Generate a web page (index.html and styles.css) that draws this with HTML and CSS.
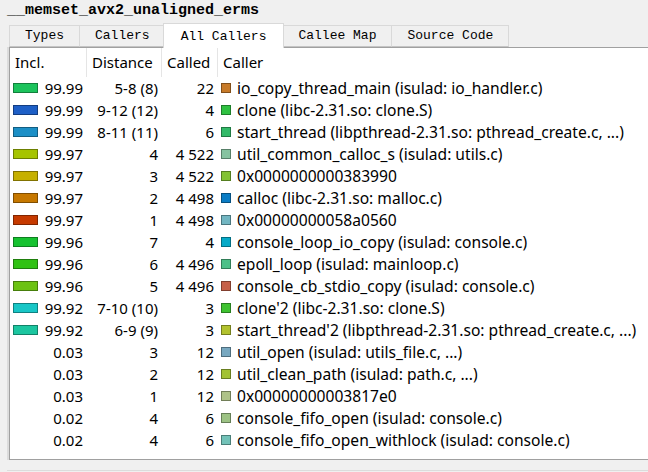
FILE: index.html
```html
<!DOCTYPE html>
<html>
<head>
<meta charset="utf-8">
<link rel="stylesheet" href="styles.css">
</head>
<body>
<div class="title">__memset_avx2_unaligned_erms</div>
<div class="tabs">
  <div class="tab">Types</div>
  <div class="tab">Callers</div>
  <div class="tab active">All Callers</div>
  <div class="tab">Callee Map</div>
  <div class="tab">Source Code</div>
</div>
<div class="panel">
  <div class="row head">
    <div class="cell h">Incl.</div>
    <div class="cell h">Distance</div>
    <div class="cell h">Called</div>
    <div class="cell h last">Caller</div>
  </div>
  <div class="row"><div class="cell incl"><span class="bar" style="background:#1cc35c"></span><span class="num">99.99</span></div><div class="cell num">5-8 (8)</div><div class="cell num">22</div><div class="cell caller"><span class="sq" style="background:#c77a28"></span>io_copy_thread_main (isulad: io_handler.c)</div></div>
  <div class="row"><div class="cell incl"><span class="bar" style="background:#1e5fc6"></span><span class="num">99.99</span></div><div class="cell num">9-12 (12)</div><div class="cell num">4</div><div class="cell caller"><span class="sq" style="background:#2fc141"></span>clone (libc-2.31.so: clone.S)</div></div>
  <div class="row"><div class="cell incl"><span class="bar" style="background:#1c8fc6"></span><span class="num">99.99</span></div><div class="cell num">8-11 (11)</div><div class="cell num">6</div><div class="cell caller"><span class="sq" style="background:#32ba68"></span>start_thread (libpthread-2.31.so: pthread_create.c, ...)</div></div>
  <div class="row"><div class="cell incl"><span class="bar" style="background:#a6c400"></span><span class="num">99.97</span></div><div class="cell num">4</div><div class="cell num">4 522</div><div class="cell caller"><span class="sq" style="background:#86c3a0"></span>util_common_calloc_s (isulad: utils.c)</div></div>
  <div class="row"><div class="cell incl"><span class="bar" style="background:#c6b000"></span><span class="num">99.97</span></div><div class="cell num">3</div><div class="cell num">4 522</div><div class="cell caller"><span class="sq" style="background:#82c232"></span>0x0000000000383990</div></div>
  <div class="row"><div class="cell incl"><span class="bar" style="background:#c67800"></span><span class="num">99.97</span></div><div class="cell num">2</div><div class="cell num">4 498</div><div class="cell caller"><span class="sq" style="background:#0a7cc4"></span>calloc (libc-2.31.so: malloc.c)</div></div>
  <div class="row"><div class="cell incl"><span class="bar" style="background:#c63a00"></span><span class="num">99.97</span></div><div class="cell num">1</div><div class="cell num">4 498</div><div class="cell caller"><span class="sq" style="background:#72b6c2"></span>0x00000000058a0560</div></div>
  <div class="row"><div class="cell incl"><span class="bar" style="background:#16c230"></span><span class="num">99.96</span></div><div class="cell num">7</div><div class="cell num">4</div><div class="cell caller"><span class="sq" style="background:#06aac8"></span>console_loop_io_copy (isulad: console.c)</div></div>
  <div class="row"><div class="cell incl"><span class="bar" style="background:#30c214"></span><span class="num">99.96</span></div><div class="cell num">6</div><div class="cell num">4 496</div><div class="cell caller"><span class="sq" style="background:#4cc088"></span>epoll_loop (isulad: mainloop.c)</div></div>
  <div class="row"><div class="cell incl"><span class="bar" style="background:#6cc212"></span><span class="num">99.96</span></div><div class="cell num">5</div><div class="cell num">4 496</div><div class="cell caller"><span class="sq" style="background:#c66048"></span>console_cb_stdio_copy (isulad: console.c)</div></div>
  <div class="row"><div class="cell incl"><span class="bar" style="background:#18c6c6"></span><span class="num">99.92</span></div><div class="cell num">7-10 (10)</div><div class="cell num">3</div><div class="cell caller"><span class="sq" style="background:#3ec230"></span>clone'2 (libc-2.31.so: clone.S)</div></div>
  <div class="row"><div class="cell incl"><span class="bar" style="background:#1cc6a0"></span><span class="num">99.92</span></div><div class="cell num">6-9 (9)</div><div class="cell num">3</div><div class="cell caller"><span class="sq" style="background:#b2c22e"></span>start_thread'2 (libpthread-2.31.so: pthread_create.c, ...)</div></div>
  <div class="row"><div class="cell incl"><span class="num">0.03</span></div><div class="cell num">3</div><div class="cell num">12</div><div class="cell caller"><span class="sq" style="background:#78a8c0"></span>util_open (isulad: utils_file.c, ...)</div></div>
  <div class="row"><div class="cell incl"><span class="num">0.03</span></div><div class="cell num">2</div><div class="cell num">12</div><div class="cell caller"><span class="sq" style="background:#a2c232"></span>util_clean_path (isulad: path.c, ...)</div></div>
  <div class="row"><div class="cell incl"><span class="num">0.03</span></div><div class="cell num">1</div><div class="cell num">12</div><div class="cell caller"><span class="sq" style="background:#aec288"></span>0x00000000003817e0</div></div>
  <div class="row"><div class="cell incl"><span class="num">0.02</span></div><div class="cell num">4</div><div class="cell num">6</div><div class="cell caller"><span class="sq" style="background:#9cc284"></span>console_fifo_open (isulad: console.c)</div></div>
  <div class="row"><div class="cell incl"><span class="num">0.02</span></div><div class="cell num">4</div><div class="cell num">6</div><div class="cell caller"><span class="sq" style="background:#72c2b8"></span>console_fifo_open_withlock (isulad: console.c)</div></div>
</div>
<div class="bottom"></div>
</body>
</html>
```

FILE: styles.css
```css
html, body {
  margin: 0;
  padding: 0;
  background: #f0f0f0;
  width: 648px;
  height: 472px;
  overflow: hidden;
}
.title {
  height: 22px;
  line-height: 22px;
  padding-left: 7px;
  font-family: "Liberation Mono", monospace;
  font-weight: bold;
  font-size: 15px;
  color: #000;
}
.tabs {
  display: flex;
  align-items: flex-end;
  height: 25px;
  padding-left: 9px;
  position: relative;
  z-index: 1;
}
.tab {
  height: 20px;
  line-height: 20px;
  padding: 0 15px;
  border: 1px solid #d9d9d9;
  border-bottom-color: #c4c4c4;
  margin-right: -1px;
  font-family: "Liberation Mono", monospace;
  font-size: 13px;
  color: #000;
  background: #f0f0f0;
  box-sizing: content-box;
}
.tab.active {
  background: #fff;
  height: 24px;
  line-height: 26px;
  padding: 0 17px;
  margin: 0 -1px -1px -2px;
  border-bottom: none;
  position: relative;
  z-index: 2;
}
.tab.active + .tab {
  margin-left: -1px;
}
.panel {
  margin-left: 9px;
  height: 411px;
  background: #fff;
  border-top: 1px solid #a0a0a0;
  border-left: 1px solid #a0a0a0;
  border-bottom: 1px solid #a0a0a0;
  font-family: "Noto Sans", sans-serif;
  font-size: 15px;
  color: #000;
  box-shadow: -2px 0 0 #dcdcdc;
}
.row {
  display: grid;
  grid-template-columns: 77px 75px 56px 1fr;
  height: 22px;
  line-height: 22px;
  white-space: nowrap;
}
.row.head {
  height: 29px;
  line-height: 29px;
}
.cell {
  overflow: visible;
}
.cell.h {
  padding-left: 5px;
  border-right: 1px solid #e5e5e5;
}
.cell.h.last {
  border-right: none;
}
.cell.num {
  text-align: right;
  padding-right: 4px;
}
.incl {
  display: flex;
  align-items: center;
  padding: 0 4px 0 3px;
}
.incl .num {
  margin-left: auto;
}
.bar {
  width: 23px;
  height: 8px;
  border: 1px solid rgba(0, 0, 0, 0.35);
}
.caller {
  display: flex;
  align-items: center;
  padding-left: 3px;
  font-size: 15.6px;
}
.sq {
  width: 8px;
  height: 8px;
  border: 1px solid rgba(0, 0, 0, 0.35);
  margin-right: 6px;
  flex: none;
}
.bottom {
  margin-top: 10px;
  margin-left: 7px;
  border-top: 1px solid #dcdcdc;
  height: 10px;
}
```
